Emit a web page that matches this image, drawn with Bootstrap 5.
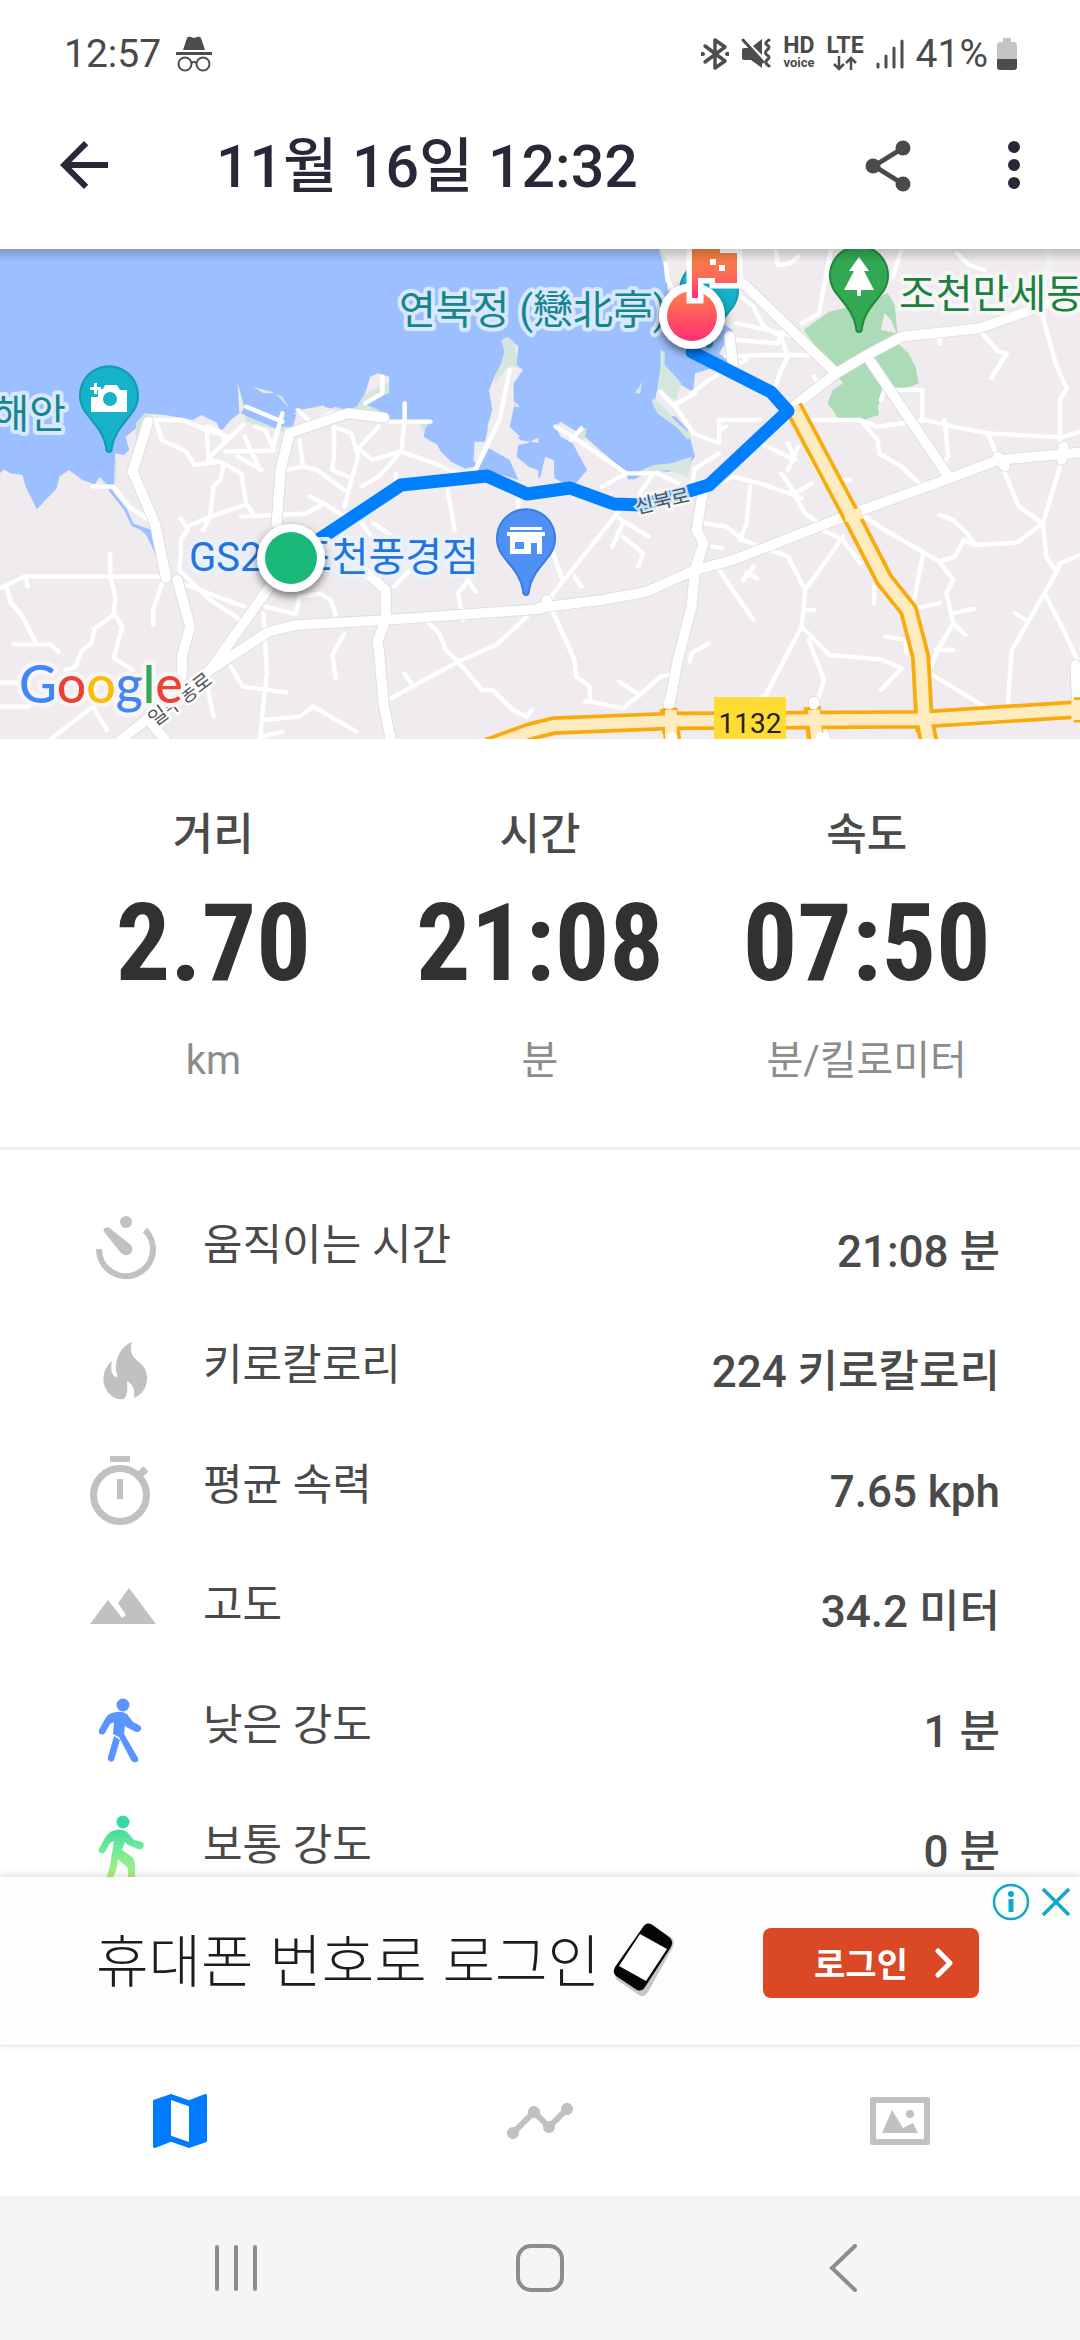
<!DOCTYPE html>
<html lang="ko">
<head>
<meta charset="utf-8">
<meta name="viewport" content="width=device-width, initial-scale=1">
<title>11월 16일 12:32</title>
<link href="https://cdn.jsdelivr.net/npm/bootstrap@5.3.0/dist/css/bootstrap.min.css" rel="stylesheet">
<style>
  body { font-family: Roboto, "Noto Sans CJK KR", sans-serif; color: #4a4a4a; background: #fff; }
  svg { display: block; flex: none; }
  .btn { --bs-btn-padding-x: 0; --bs-btn-padding-y: 0; border: 0; border-radius: 0; }
  .status-bar { height: 81px; padding: 26px 62px 0 64px; font-size: 39px; line-height: 56px; }
  .status-time { gap: 14px; }
  .status-icons { gap: 12px; }
  .stacked { font-weight: 700; font-size: 23px; line-height: 18px; text-align: center; }
  .stacked span { display: block; }
  .stacked .voice { font-size: 13px; line-height: 16px; }
  .app-bar { height: 168px; padding: 0 30px 0 48px; color: #2a2838; }
  .app-title { font-size: 59px; line-height: 80px; font-weight: 500; margin: 4px 0 0 96px; }
  .app-actions { gap: 60px; }
  .map-view { height: 490px; overflow: hidden; background: #efebef; }
  .map-view svg { width: 100%; height: 100%; }
  .totals { padding: 66px 50px 0; height: 408px; }
  .total-name { font-size: 44px; line-height: 60px; font-weight: 500; }
  .total-value { font-family: "Roboto Condensed", Roboto, sans-serif; font-size: 108px; line-height: 136px; font-weight: 700; color: #303132; margin-top: 10px; }
  .total-unit { font-size: 40px; line-height: 60px; color: #8c8c8c; margin-top: 20px; }
  .rule { height: 3px; background: #f1f1f1; }
  .details { min-height: 0; overflow: hidden; padding-top: 35px; }
  .details ul { margin: 0; }
  .detail-row { height: 120px; padding: 0 80px; gap: 43px; line-height: 60px; }
  .detail-name { font-size: 43px; }
  .detail-value { font-size: 44px; padding-top: 14px; font-weight: 500; }
  .promo { height: 169px; background: #fdfdfd; border-bottom: 1px solid #e4e4e4; padding: 0 101px 0 96px; box-shadow: 0 -2px 8px rgba(0,0,0,.14); }
  .promo-text { font-family: "Noto Sans CJK KR", sans-serif; font-size: 57px; line-height: 80px; font-weight: 300; color: #1c1c1c; gap: 12px; }
  .promo-text span { padding-bottom: 8px; }
  .promo .promo-login { width: 216px; height: 70px; margin-top: 4px; background: #da4826; color: #fff; border-radius: 8px; font-family: "Noto Sans CJK KR", sans-serif; font-size: 34px; line-height: 50px; font-weight: 700; gap: 26px; padding-left: 26px; }
  .promo-tools { top: 6px; right: 8px; gap: 10px; }
  .tab-bar { height: 150px; background: #fff; }
  .tab-bar .btn { color: #c1c1c1; }
  .tab-bar .btn.active { color: #007aff; }
  .system-bar { height: 144px; background: #f5f5f5; padding: 0 84px; }
  .system-bar .btn { color: #8d8d8d; }
  .land-label { font-size: 40px; font-weight: 400; stroke-width: 8px; stroke-linejoin: round; paint-order: stroke; }
  .street-label { font-size: 20px; fill: #555; stroke: #fff; stroke-width: 5px; paint-order: stroke; }
</style>
<script src="https://cdn.jsdelivr.net/npm/bootstrap@5.3.0/dist/js/bootstrap.bundle.min.js"></script>
</head>
<body class="d-flex flex-column vh-100 overflow-hidden">

<div class="status-bar d-flex justify-content-between align-items-center flex-shrink-0">
  <div class="status-time d-flex align-items-center">
    <span>12:57</span>
    <svg width="38" height="36" viewBox="0 0 38 36" fill="#4d4d4d"><path d="M8 14 12 2q1-2 4-1l3 1 3-1q3-1 4 1l4 12zM1 16h36v3H1z"/><g fill="none" stroke="#4d4d4d" stroke-width="2"><circle cx="10" cy="28" r="6.500"/><circle cx="28" cy="28" r="6.500"/><path d="M16 27q3-2 6 0"/></g></svg>
  </div>
  <div class="status-icons d-flex align-items-center">
    <svg width="28" height="34" viewBox="0 0 28 34" fill="none" stroke="#4d4d4d" stroke-width="3.500" stroke-linejoin="round" stroke-linecap="round"><path d="M4 9 24 24 14 31V3l10 7L4 25"/><path d="M1 17h1M26 17h1" stroke-width="4"/></svg>
    <svg width="30" height="32" viewBox="0 0 30 32"><path d="M1 12q0-2 2-2h5l13 13v7L10 22H3q-2 0-2-2zM12 8l9-7v16z" fill="#4d4d4d"/><path d="M2 2l20 22" stroke="#4d4d4d" stroke-width="3" stroke-linecap="round"/><path d="M28 2q-5 3-2 5 4 2 0 5-3 3 0 5 4 2 0 5-3 3 2 6" fill="none" stroke="#4d4d4d" stroke-width="3" stroke-linecap="round"/></svg>
    <div class="stacked"><span>HD</span><span class="voice">voice</span></div>
    <div class="stacked"><span>LTE</span><svg class="mx-auto" width="32" height="16" viewBox="0 0 32 16" fill="none" stroke="#4d4d4d" stroke-width="2.500"><path d="M10 1v13M5 9l5 5 5-5M22 15V3M17 8l5-5 5 5"/></svg></div>
    <svg width="28" height="32" viewBox="0 0 28 32" stroke="#4d4d4d" stroke-width="3" stroke-linecap="round"><path d="M2 26v3M10 18v11M18 10v19M26 3v26"/></svg>
    <div class="d-flex align-items-center gap-2"><span>41%</span>
    <svg width="22" height="34" viewBox="0 0 22 34"><path d="M7 1h8v4h3q3 0 3 4v13H1V9q0-4 3-4h3z" fill="#c4c4c4"/><path d="M1 22h20v8q0 3-3 3H4q-3 0-3-3z" fill="#4d4d4d"/></svg></div>
  </div>
</div>

<header class="app-bar d-flex align-items-center flex-shrink-0">
  <button class="btn" type="button" aria-label="뒤로"><svg width="72" height="72" viewBox="0 0 24 24" fill="#2a2838"><path d="M20 11H7.830l5.590-5.590L12 4l-8 8 8 8 1.410-1.410L7.830 13H20z"/></svg></button>
  <h1 class="app-title flex-grow-1">11월 16일 12:32</h1>
  <div class="app-actions d-flex align-items-center">
    <button class="btn" type="button" aria-label="공유"><svg width="60" height="60" viewBox="0 0 60 60" fill="#4a4a4a"><path d="M16 31 45 13M16 31l29 18" stroke="#4a4a4a" stroke-width="5"/><circle cx="15" cy="31" r="7.500"/><circle cx="45" cy="13" r="7.500"/><circle cx="45" cy="49" r="7.500"/></svg></button>
    <button class="btn" type="button" aria-label="더보기"><svg width="72" height="72" viewBox="0 0 24 24" fill="#2a2838"><circle cx="12" cy="6" r="2"/><circle cx="12" cy="12" r="2"/><circle cx="12" cy="18" r="2"/></svg></button>
  </div>
</header>

<section class="map-view flex-shrink-0" aria-label="지도">
<svg viewBox="0 0 1080 490" preserveAspectRatio="xMidYMid slice">
  <defs>
    <linearGradient id="finish" x1="0" y1="0" x2="0" y2="1"><stop offset="0" stop-color="#ff8048"/><stop offset="1" stop-color="#ff2e78"/></linearGradient>
    <linearGradient id="flagFill" x1="0" y1="0" x2="0" y2="1"><stop offset="0" stop-color="#f08a3c"/><stop offset=".6" stop-color="#ff6a58"/><stop offset="1" stop-color="#ff2e78"/></linearGradient>
    <linearGradient id="barShade" x1="0" y1="0" x2="0" y2="1"><stop offset="0" stop-opacity=".2"/><stop offset="1" stop-opacity="0"/></linearGradient>
    <filter id="drop" x="-50%" y="-50%" width="200%" height="200%"><feDropShadow dx="0" dy="4" stdDeviation="5" flood-opacity=".55"/></filter>
    <path id="pin" d="M0 57c-2 0-3-2-3-5C-6 35-17 27-25 15A29 29 0 1 1 25 15C17 27 6 35 3 52c0 3-1 5-3 5z"/>
  </defs>

  <!-- sea and parks, west half then east half -->
  <g transform="matrix(.3444 0 0 .3333 0 -9)">
    <path fill="#d5e6de" d="M0 690 10 685 30 700 70 705 75 745 110 800 170 710 205 687 240 710 270 730 290 708 300 733 335 738 340 660 310 650 310 635 350 630 355 585 390 560 395 495 415 490 440 520 395 600 395 27H1568V27L1490 290 1505 370 1500 510H1515L1500 535H1485L1450 490 1430 470 1455 300 1130 410 1152 455 1125 430 945 520 930 478 870 495 835 560 820 575 715 545 690 430 700 425 740 500 790 460 730 440 760 435 820 455 860 520 1240 540 1265 548 1230 575 1100 300H350L0 600z"/>
    <path fill="#9cc0ff" d="M0 27H1575V690H1560L1535 680 1500 650 1490 600 1510 590 1480 560 1490 500 1510 500 1490 480 1492 430 1518 390 1500 375 1505 320 1475 290 1455 300 1465 335 1455 370 1440 400 1420 450 1430 510 1415 560 1420 605H1378L1375 660 1385 678 1350 686 1310 665 1280 635 1270 615 1230 590 1235 565 1250 545 1130 540 1100 510 1050 490 1130 460 1130 410 1098 400 1075 410 1060 460 1035 500 1010 510 970 500 950 520 940 495 870 510 850 522 820 470 790 455 735 440 765 460 800 460 835 500 860 525 850 560 820 560 800 565 720 530 700 520 710 500 690 430 695 520 670 540 640 577 630 548 585 525 560 540 480 525 420 520 395 550 395 565 365 590 375 630 360 645 335 640 330 735 310 733 290 710 275 733 240 720 200 690 172 710 165 745 107 808 75 740 65 705 30 700 12 688 0 700z"/>
    <path fill="#efebef" d="M865 510 900 540 965 530 1010 515 940 500zM1480 375 1518 390 1490 430 1492 500 1480 560 1510 600 1568 610V590L1530 610 1505 615 1500 650 1530 690 1560 690 1505 722 1400 640 1430 510 1420 450z"/>
    <path fill="#9cc0ff" d="M1420 625 1480 660 1505 720 1440 700 1385 695z"/>
    <path fill="none" stroke="#9cc0ff" stroke-width="8" d="M318 748 365 810 385 855 430 875"/>
    <path fill="#9cc0ff" d="M385 850 440 870 455 950 425 885z"/>
  </g>
  <g transform="matrix(.3444 0 0 .3333 540 -9)">
    <path fill="#9cc0ff" d="M-60 27H345L365 70 370 150 560 270 520 340 555 370 500 385 450 400 445 455 400 430 385 470 340 450 330 500 350 520 395 530 430 570 450 650 420 690 370 695 320 690 275 718H255L250 695 180 635 130 590 60 545 45 560 60 590 95 610 110 640 137 690 100 735 70 730 42 715 40 660 15 650 0 715-5 710-5 690-15 680-5 650-5 590 0 590 0 595z"/>
    <path fill="#d5e6de" d="M350 330 362 335 362 375 385 400 410 430 395 480 340 450 350 380zM276 458 298 425 290 462zM330 475 360 500 390 540 440 585 430 600 395 560 340 520 325 485zM85 590 110 570 135 565 130 600zM275 700 330 675 380 670 440 650 430 710 370 690zM345 27 370 60 365 95z"/>
    <path fill="#acdbb7" d="M765 270 840 215 900 200 1010 160 1030 195 1035 250 1040 310 1070 340 1090 380 1100 430 1075 440 1000 455 980 500 985 525 940 540 870 543 850 510 835 490 850 450 880 430z"/>
    <path fill="#efebef" d="M1000 220 1020 240 1035 280 990 270z"/>
  </g>

  <!-- lanes -->
  <g fill="none" stroke="#fff" stroke-linecap="round" stroke-linejoin="round" stroke-width="13">
    <path transform="matrix(.3444 0 0 .3333 0 -9)" d="M445 540H530L600 570 660 590M455 550 470 600 540 635 565 675 640 665 700 700M600 560 605 660 650 670 640 720 620 740 610 830 590 870M610 650 655 605 705 555M655 605 640 575 600 560M655 635 790 632 820 520M740 560 770 570 795 630M710 590 755 690M690 650 760 690M700 700 715 790 740 830M610 830 710 795M540 860 600 835M525 835 545 870 525 900V940L520 990 610 1080 700 1140M540 1035 710 1100M715 500 820 545M870 600 880 680 830 690M880 680 920 690 1000 750M970 560V640L965 690 1010 710M970 560 1020 580 1040 650 1010 760 1000 800M1175 490V540L1165 635 1080 660 1040 625 1100 560M1130 545H1250M1165 635 1260 670 1330 700M1165 635 1100 710 1050 740M1060 490 1110 460V410M865 510 900 545M700 830 800 825 890 820 940 790 900 770M940 790 1000 830M1050 850 1100 920M1085 850 1140 890M1150 700V740M1300 750 1320 870M1480 390 1450 540 1380 690M270 740H330L375 800 440 845M0 1045 70 1010H470M75 1010 80 1040M20 1045 30 1085 65 1130 105 1210M40 1213H145L170 1235M320 940V1010L335 1070 330 1125 275 1165 265 1210 235 1235 220 1280 190 1290M335 1125 355 1160 330 1255 385 1290M470 1030 445 1110V1155M765 1120 775 1300 760 1440 755 1500M670 1280 705 1340 830 1357M765 1440 870 1430 910 1400 1035 1475M760 1490 820 1475M600 1330 620 1430M0 1328H50M0 1400H80L140 1370M270 1400 310 1470M1000 1180 965 1245 975 1315M1245 1150 1275 1180 1295 1230 1330 1265 1135 1375M1175 1300 1200 1340M1330 1265 1440 1215 1530 1130M1330 1265 1400 1350H1430L1490 1410 1530 1430 1545 1410M860 1120 870 1070 930 1060 960 1080 975 1125M770 1100 850 1120M1040 1000 1110 1040M1145 1040 1190 990M1360 1020 1330 1060 1345 1140M1360 1020 1380 1055M1505 780V800M150 1495 270 1400M905 550 960 520"/>
    <path transform="matrix(.3444 0 0 .3333 540 -9)" d="M365 70 370 120 405 180M845 27 810 220 760 250M685 30 690 75 725 70 750 50M570 160 620 200 650 260 700 290 720 350M570 250 660 270 740 290M570 300 690 310 710 270M540 350 640 345H780M720 350 700 390 680 450M550 380 600 360M350 455 400 510 445 580 520 610 520 540H640M440 460 490 420 540 390M390 495 450 460M520 640 450 685 440 740M520 570 540 560M45 560 110 600 250 700 180 740M90 600 120 565M250 700 340 700 400 730M1050 27 1025 110M1210 40 1245 75 1290 90M1460 230 1500 380 1530 445 1510 480V600M1280 275 1330 335 1355 340 1310 415M1160 280V310M640 610 700 640 740 660 720 610M720 690 750 620M780 540H930L980 560 1120 540 1200 560 1300 580 1515 592 1568 575M935 545 980 600 985 640 1050 680 1100 730M1175 540 1185 650 1160 690M990 480 1000 450H1110V540M795 410 820 440M1300 580 1350 700 1390 800 1460 850 1470 950 1500 995 1465 1060 1370 1230 1355 1440M1510 680 1460 850 1385 908 1265 915 1240 880 1200 840 1160 825M1265 915 1230 900 1205 950 1160 965M930 820 1000 870 1160 965 1200 1020 1180 1060 1200 1150 1160 1220 1130 1290M1110 950 1085 1090M1200 1120 1260 1107M1090 1105 1160 1090M1200 1150 1235 1185M1465 1060 1520 1170 1560 1260M1500 995 1510 970 1568 945M1380 1120 1410 1140M840 1245 990 1258 1050 1285 990 1350M840 1245 760 1160 770 1050 860 920 880 890M760 1160 655 1365 630 1380M780 1200 825 1320 800 1400M770 1110H795M520 990 620 1140M610 740 600 850 580 900M500 740 560 710 640 730 760 775M480 850 540 860 590 900 720 950 770 1050M600 1000 630 1015M620 980 590 1020M730 750 770 820 810 850M700 700 740 760 790 730M820 870 880 900 930 970M780 640 820 720M830 720H900M240 800 35 1065 35 1110 100 1260 105 1310 145 1340V1385L240 1405 290 1365 350 1310 390 1300M230 1325 290 1365M130 1385H145M435 1265 440 1240 490 1210M210 920 240 850M240 890 300 940 285 980M230 835 315 890M35 930 65 1020M100 1010 120 1040M500 920 530 925M1005 1190 1060 1200 1065 1240M1140 1305 1290 1400M1150 1230 1200 1230M970 1040V1090M290 760 330 700"/>
  </g>

  <!-- streets -->
  <g fill="none" stroke-linecap="round" stroke-linejoin="round">
    <g stroke="#dcdce3" stroke-width="34"><use href="#west"/><use href="#east"/></g>
    <g stroke="#fff" stroke-width="29">
      <path id="west" transform="matrix(.3444 0 0 .3333 0 -9)" d="M430 545 385 695 450 850 482 1013M515 1020 552 1160 528 1250V1310M1115 533 1010 520 840 580 815 690 803 850 845 950M845 950 610 1290 350 1500M440 1450 480 1500M610 1290 780 1175 860 1155 1120 1140 1568 1107M1050 985 1120 1050V1140L1097 1200 1115 1400 1135 1500"/>
      <path id="east" transform="matrix(.3444 0 0 .3333 540 -9)" d="M0 1103 180 1080 310 1055 450 990 560 960 910 820 1190 715 1330 660 1568 638M720 512 860 400 950 345 1050 290 1275 265 1440 205 1568 150M590 130 860 400M960 365 1190 715M475 740 455 870 475 910 450 990 440 1100 400 1260 375 1400 385 1500M500 735 720 512M1330 650 1350 680M1520 620 1515 660M20 1080V1100M1555 1275 1560 1400M795 1385 805 1440 830 1500M550 290 560 370"/>
    </g>
    <path stroke="#f0f4ef" stroke-width="22" transform="matrix(.3444 0 0 .3333 540 -9)" d="M1475 27 1480 80 1450 150 1440 205"/>
  </g>

  <!-- trunk road 1132 and its branch -->
  <g transform="matrix(.3444 0 0 .3333 540 -9)" fill="none" stroke-linejoin="round">
    <path stroke="#f9ab0d" stroke-width="56" d="M735 500 905 830 1000 1020 1070 1110 1105 1250 1115 1435 1130 1510M-150 1520-30 1475 40 1457 380 1443 1110 1438 1568 1408"/>
    <path stroke="#f9ab0d" stroke-width="76" d="M355 1443H400M780 1440H815M1090 1438H1140M1550 1410H1580"/>
    <path stroke="#f9ab0d" stroke-width="50" d="M372 1405 385 1500M790 1400 800 1500"/>
    <path stroke="#feebc0" stroke-width="34" d="M735 500 905 830 1000 1020 1070 1110 1105 1250 1115 1435 1130 1510M-150 1520-30 1475 40 1457 380 1443 1110 1438 1568 1408M885 830 935 820M380 1410V1500M795 1410 805 1500M1560 1380V1440"/>
    <path stroke="#fff" stroke-width="28" stroke-linecap="round" d="M375 1395V1380M795 1385V1395M385 1490V1500M815 1490V1500"/>
  </g>

  <!-- recorded route -->
  <path fill="none" stroke="#0080ff" stroke-width="13" stroke-linejoin="round" stroke-linecap="round" d="M291 309 401 236 487 227 527 245 570 239 614 255 643 256 709 236 788 162 771 143 692 103"/>

  <g class="land-label">
    <text x="399" y="75" fill="#16858d" stroke="#d8e8fd">연북정 (戀北亭)</text>
    <text x="66" y="179" text-anchor="end" fill="#16858d" stroke="#d8e8fd">해안</text>
    <text x="899" y="59" fill="#1c8040" stroke="#f6f6f6">조천만세동</text>
    <text x="189" y="322" fill="#2374dc" stroke="#e9f1fc">GS25 조천풍경점</text>
  </g>
  <text class="street-label" transform="translate(637 265) rotate(-13)" stroke-opacity=".75">신북로</text>
  <text class="street-label" transform="translate(155 478) rotate(-37)">일주동로</text>
  <rect x="714" y="448" width="72" height="42" fill="#ffdc35"/>
  <text x="750" y="484" font-size="28" text-anchor="middle" fill="#26231a">1132</text>

  <!-- places -->
  <use href="#pin" x="109" y="146" fill="#15b2ca" stroke="#129aae" stroke-width="2"/>
  <path fill="#fff" d="M91 148h7v-8h5l2-4h12l3 5h7v22H91zM94 134h3v4h4v3h-4v4h-3v-4h-4v-3h4z"/><circle cx="110" cy="150" r="7" fill="#15b2ca"/>
  <use href="#pin" x="526" y="289" fill="#4f90f4" stroke="#3b7be6" stroke-width="2"/>
  <path fill="#fff" d="M510 278h32v3h-32zM507 283h38v4h-3v18h-5v-11h-6v11h-21v-18h-3z"/><path fill="#4f90f4" d="M515 293h9v7h-9z"/>
  <use href="#pin" x="859" y="26" fill="#33a852" stroke="#20873c" stroke-width="2"/>
  <path fill="#fff" d="M859 8l10 14h-5l10 19h-13v6h-4v-6h-13l10-19h-5z"/>
  <use href="#pin" x="709" y="41" fill="#15b2ca" stroke="#129aae" stroke-width="2"/>

  <!-- start and finish -->
  <circle cx="291" cy="309" r="34" fill="#fff" filter="url(#drop)"/>
  <circle cx="291" cy="309" r="26" fill="#1ab87b"/>
  <circle cx="692" cy="67" r="33" fill="#fff" filter="url(#drop)"/>
  <circle cx="692" cy="67" r="25" fill="url(#finish)"/>
  <path d="M692-5h28v9h17v30h-22v-5h-17v20h-6z" fill="#fff" stroke="#fff" stroke-width="11"/>
  <path d="M692-5h28v9h17v30h-22v-5h-17v20h-6z" fill="url(#flagFill)"/>
  <path d="M710 10h6v6h-6zM719 16h6v6h-6z" fill="#fff"/>

  <text x="19" y="454" font-family="Lato, sans-serif" font-size="52" font-weight="500" stroke="#f7f5f7" stroke-width="9" stroke-linejoin="round" paint-order="stroke"><tspan fill="#4285f4">G</tspan><tspan fill="#ea4335">o</tspan><tspan fill="#fbbc05">o</tspan><tspan fill="#4285f4">g</tspan><tspan fill="#34a853">l</tspan><tspan fill="#ea4335">e</tspan></text>
  <rect width="1080" height="13" fill="url(#barShade)"/>
</svg>
</section>

<section class="totals flex-shrink-0">
  <div class="row g-0 text-center">
    <div class="col-4"><div class="total-name">거리</div><div class="total-value">2.70</div><div class="total-unit">km</div></div>
    <div class="col-4"><div class="total-name">시간</div><div class="total-value">21:08</div><div class="total-unit">분</div></div>
    <div class="col-4"><div class="total-name">속도</div><div class="total-value">07:50</div><div class="total-unit">분/킬로미터</div></div>
  </div>
</section>
<div class="rule flex-shrink-0"></div>

<section class="details flex-grow-1">
  <ul class="list-unstyled">
    <li class="detail-row d-flex align-items-center">
      <svg width="80" height="80" viewBox="80 1205 80 80" fill="#c1c1c1"><circle cx="126" cy="1222" r="6"/><path d="M105 1228q4-2 7 2l19 15q3 6-1 9-5 3-9-1l-16-20q-3-3 0-5z"/><path d="M99 1249a27 27 0 1 0 46-19" fill="none" stroke="#c1c1c1" stroke-width="6"/></svg>
      <span class="detail-name flex-grow-1">움직이는 시간</span><span class="detail-value">21:08 분</span>
    </li>
    <li class="detail-row d-flex align-items-center">
      <svg width="80" height="80" viewBox="80 1325 80 80" fill="#c1c1c1"><path d="M132 1342c-3 9 0 15 7 20 13 10 10 30-5 36 1-9-1-13-7-17 1 8 0 14-2 17-2 2-4 1-7 1-16-5-20-26-6-38-2 9 0 16 5 16 1 0 0-3-1-6-1-13 5-25 16-29z"/></svg>
      <span class="detail-name flex-grow-1">키로칼로리</span><span class="detail-value">224 키로칼로리</span>
    </li>
    <li class="detail-row d-flex align-items-center">
      <svg width="80" height="80" viewBox="80 1445 80 80" fill="#c1c1c1"><path d="M110 1456h20v6h-20zM117 1479h6v20h-6z"/><circle cx="120" cy="1495" r="26.500" fill="none" stroke="#c1c1c1" stroke-width="7"/><path d="m138 1476 8-7" stroke="#c1c1c1" stroke-width="7"/></svg>
      <span class="detail-name flex-grow-1">평균 속력</span><span class="detail-value">7.65 kph</span>
    </li>
    <li class="detail-row d-flex align-items-center">
      <svg width="80" height="80" viewBox="80 1565 80 80" fill="#c1c1c1"><path d="m90 1624 18-24 14 18 4-3-8-12 11-15 27 36z"/></svg>
      <span class="detail-name flex-grow-1">고도</span><span class="detail-value">34.2 미터</span>
    </li>
    <li class="detail-row d-flex align-items-center">
      <svg width="80" height="80" viewBox="80 1685 80 80" fill="#5b93ff"><circle cx="123" cy="1705" r="6.500"/><path d="M112 1713q9-3 15 1l6 8 6 3q4 3 1 6-3 2-6 0l-8-4-1-2-1 9 14 24q1 4-2 4-3 1-5-2l-12-23-6-3 1-12-4 2-5 9q-3 3-6 0-1-3 1-5l5-9q3-5 7-6z"/><path d="m114 1736 6 4-6 20q-2 3-5 1-2-2-1-4z"/></svg>
      <span class="detail-name flex-grow-1">낮은 강도</span><span class="detail-value">1 분</span>
    </li>
    <li class="detail-row d-flex align-items-center">
      <svg width="80" height="80" viewBox="80 1805 80 80" fill="url(#pace)"><defs><linearGradient id="pace" gradientUnits="userSpaceOnUse" x1="0" y1="1820" x2="0" y2="1880"><stop offset=".1" stop-color="#38d8a4"/><stop offset=".45" stop-color="#6ee898"/><stop offset="1" stop-color="#b8f080"/></linearGradient></defs><circle cx="123" cy="1822" r="6.500"/><path d="M112 1831q9-3 15 1l7 8 8 2q3 2 1 6-2 2-5 1l-10-4-3-3-3 8 10 7q3 3 3 8v23h-7v-20l-16-14 2-13-4 2-5 9q-3 3-6 0-1-3 1-5l5-9q3-5 7-7z"/><path d="m112 1852 6 5-1 10-7 20-6-1 6-20z"/></svg>
      <span class="detail-name flex-grow-1">보통 강도</span><span class="detail-value">0 분</span>
    </li>
  </ul>
</section>

<aside class="promo position-relative d-flex align-items-center justify-content-between flex-shrink-0">
  <div class="promo-text d-flex align-items-center">
    <span>휴대폰 번호로 로그인</span>
    <svg width="64" height="78" viewBox="0 0 64 78"><path d="M31 8q4-8 10-5l19 13q3 3 1 9L36 70q-4 6-9 3L5 58q-3-3-1-9z" fill="#c9c5c3"/><path d="M31 5q3-5 8-3l18 13q5 4 2 10L33 65q-3 5-8 3L4 54q-4-3-1-9z" fill="#050505"/><path d="M28 12 55 27 34 59 7 44z" fill="#fff"/></svg>
  </div>
  <button class="promo-login btn d-flex align-items-center justify-content-center" type="button">로그인
    <svg width="20" height="30" viewBox="0 0 20 30" fill="none" stroke="#fff" stroke-width="5" stroke-linecap="round" stroke-linejoin="round"><path d="m4 3 12 12L4 27"/></svg>
  </button>
  <div class="promo-tools position-absolute d-flex align-items-center">
    <button class="btn" type="button" aria-label="광고 정보"><svg width="38" height="38" viewBox="0 0 38 38" fill="#12a9c8"><circle cx="19" cy="19" r="17" fill="none" stroke="#12a9c8" stroke-width="2.500"/><circle cx="19" cy="11" r="3"/><path d="M16.500 16h5v13h-5z"/></svg></button>
    <button class="btn" type="button" aria-label="닫기"><svg width="32" height="38" viewBox="0 0 32 38" stroke="#12a9c8" stroke-width="3.500"><path d="m3 6 26 26M29 6 3 32"/></svg></button>
  </div>
</aside>

<nav class="tab-bar flex-shrink-0 row g-0">
  <button class="btn active col-4 d-flex align-items-center justify-content-center" type="button" aria-label="지도"><svg width="72" height="72" viewBox="0 0 24 24" fill="currentColor"><path d="M20.500 3l-.16.030L15 5.100 9 3 3.360 4.900c-.21.070-.36.250-.36.480V20.500c0 .28.220.5.500.5l.16-.030L9 18.900l6 2.100 5.640-1.900c.21-.070.360-.250.360-.480V3.500c0-.280-.220-.5-.5-.5zM15 19l-6-2.110V5l6 2.110V19z"/></svg></button>
  <button class="btn col-4 d-flex align-items-center justify-content-center" type="button" aria-label="그래프"><svg width="72" height="72" viewBox="0 0 24 24" fill="currentColor"><path d="M23 8c0 1.100-.9 2-2 2-.18 0-.35-.02-.51-.07l-3.560 3.550c.05.160.070.340.070.520 0 1.100-.9 2-2 2s-2-.9-2-2c0-.18.020-.36.070-.52l-2.550-2.550c-.16.050-.34.070-.52.070s-.36-.02-.52-.07l-4.550 4.560c.05.160.070.330.070.510 0 1.100-.9 2-2 2s-2-.9-2-2 .9-2 2-2c.18 0 .35.020.51.070l4.560-4.550C8.020 9.360 8 9.180 8 9c0-1.100.9-2 2-2s2 .9 2 2c0 .18-.02.36-.07.520l2.550 2.550c.16-.05.34-.07.52-.07s.36.020.52.070l3.550-3.560C19.020 8.350 19 8.180 19 8c0-1.100.9-2 2-2s2 .9 2 2z"/></svg></button>
  <button class="btn col-4 d-flex align-items-center justify-content-center" type="button" aria-label="사진"><svg width="72" height="72" viewBox="0 0 72 72" fill="currentColor"><path fill-rule="evenodd" d="M8 12h56q2 0 2 2v44q0 2-2 2H8q-2 0-2-2V14q0-2 2-2zM12 18v36h48V18z"/><path d="M18 48 28 25 39 43 49 38 54 48z"/><circle cx="46" cy="29" r="4"/></svg></button>
</nav>

<nav class="system-bar d-flex flex-shrink-0">
  <button class="btn flex-fill w-100 d-flex align-items-center justify-content-center" type="button" aria-label="최근 앱"><svg width="48" height="48" viewBox="0 0 48 48" stroke="currentColor" stroke-width="4" stroke-linecap="round"><path d="M5 3v42M24 3v42M43 3v42"/></svg></button>
  <button class="btn flex-fill w-100 d-flex align-items-center justify-content-center" type="button" aria-label="홈"><svg width="48" height="48" viewBox="0 0 48 48" fill="none" stroke="currentColor" stroke-width="4"><rect x="2" y="2" width="44" height="44" rx="13"/></svg></button>
  <button class="btn flex-fill w-100 d-flex align-items-center justify-content-center" type="button" aria-label="뒤로"><svg width="32" height="48" viewBox="0 0 32 48" fill="none" stroke="currentColor" stroke-width="4" stroke-linecap="round"><path d="M27 2 4 24 27 46"/></svg></button>
</nav>
</body>
</html>
